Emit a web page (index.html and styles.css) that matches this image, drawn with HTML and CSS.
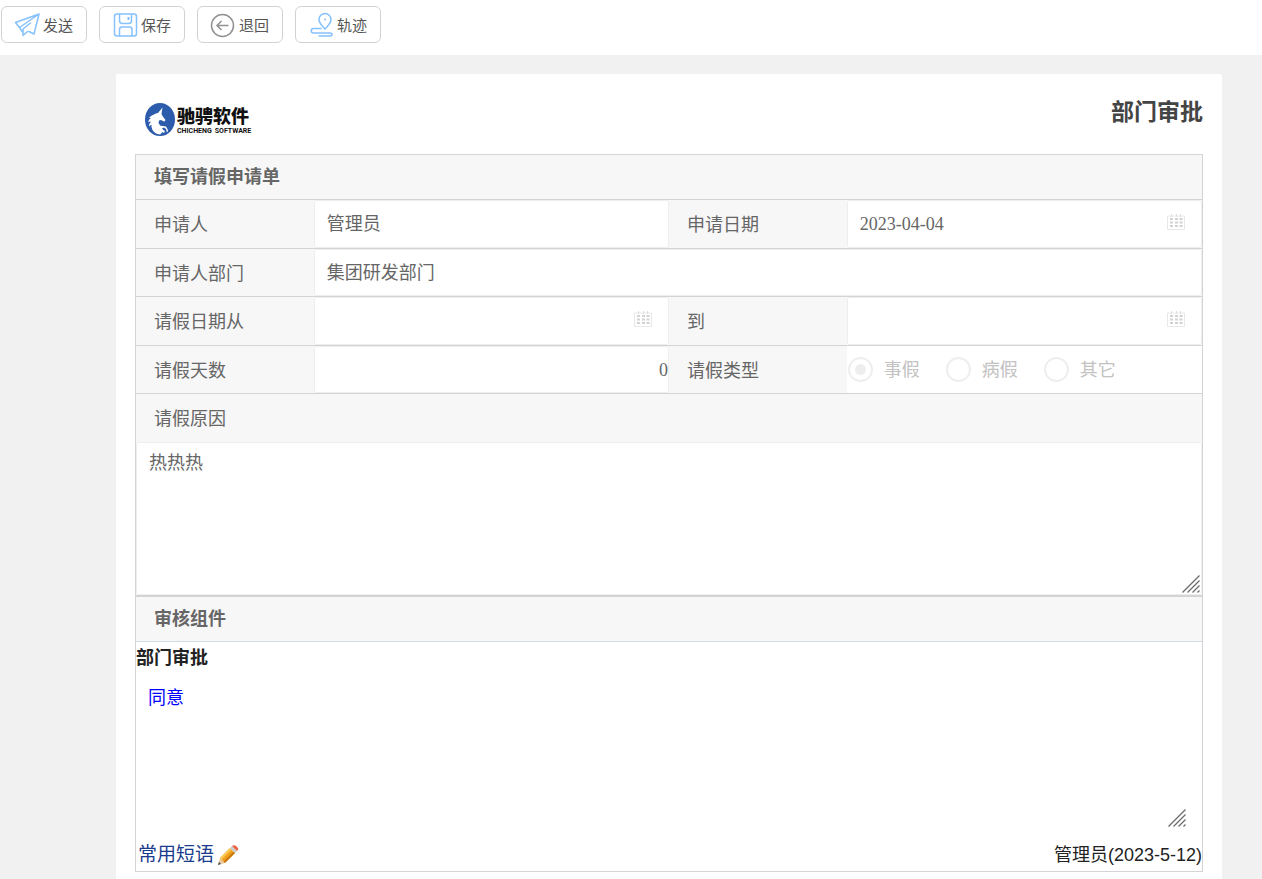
FILE: index.html
```html
<!DOCTYPE html>
<html lang="zh-CN">
<head>
<meta charset="utf-8">
<meta name="viewport" content="width=device-width, initial-scale=1">
<title>部门审批</title>
<link rel="stylesheet" href="styles.css">
</head>
<body>
<svg class="sprite" aria-hidden="true">
  <symbol id="calendar" viewBox="0 0 18 17">
    <path d="M.5 2v13.500h17V2z" fill="none" stroke="#e8e8e8"/>
    <path d="M4.500 0v3M9.500 0v3M13.500 0v3" stroke="#dedede"/>
    <path d="M3 5h3M8 5h3M12.500 5h3M3 8.500h3M8 8.500h3M12.500 8.500h3M3 12h3M8 12h3M12.500 12h3" stroke="#d2d2d2" stroke-width="2"/>
  </symbol>
  <symbol id="grip" viewBox="0 0 18 18">
    <path d="M.5 17.500L17.500.5M5.500 17.500L17.500 5.500M10.500 17.500l7-7M15.500 17.500l2-2" fill="none" stroke="#6b6b6b" stroke-width="1.300"/>
  </symbol>
</svg>
<header class="toolbar">
  <button type="button" class="tool">
    <svg class="tool-icon" viewBox="0 0 25 25" fill="none" stroke="#85c1fc" stroke-width="1.500" stroke-linejoin="round" stroke-linecap="round"><path d="M25 1L1.500 9.500l4 5M25 1l-5 20-5-2.500M25 1L5.500 14.500l3 4.500M9 22.500v-6.500l7.500-6M9 22.500l4.500-4"/></svg>
    <span>发送</span>
  </button>
  <button type="button" class="tool">
    <svg class="tool-icon" viewBox="0 0 25 25" fill="none" stroke="#85c1fc" stroke-width="1.500"><rect x="2.500" y="1" width="22" height="22" rx="2.500"/><path d="M7.500 1V7.500q0 3 3 3h6q3 0 3-3V1M7.500 23v-6.500q0-2.500 2.500-2.500h7.500q2.500 0 2.500 2.500V23"/><path d="M16.500 4v3" stroke-width="2"/></svg>
    <span>保存</span>
  </button>
  <button type="button" class="tool">
    <svg class="tool-icon" viewBox="0 0 25 25" fill="none" stroke="#919191" stroke-width="1.500"><circle cx="12.500" cy="12.500" r="11"/><path d="M18.500 12.500h-12M11.500 8L7 12.500l4.500 4.500"/></svg>
    <span>退回</span>
  </button>
  <button type="button" class="tool">
    <svg class="tool-icon" viewBox="0 0 25 25" fill="none" stroke="#85c1fc" stroke-width="1.500" stroke-linecap="round"><path d="M17 16q-6-6-6-9.500a6 6 0 0 1 12 0Q23 10 17 16zM13 15.500H5.500a2 2 0 0 0 0 4.500H22q2 0 2 1.500T22 23H11"/><circle cx="17" cy="6.500" r="1" fill="#85c1fc" stroke="none"/></svg>
    <span>轨迹</span>
  </button>
</header>
<main class="page">
  <form class="sheet">
    <div class="sheet-head">
      <div class="logo">
        <svg class="logo-mark" viewBox="0 0 30 33" aria-hidden="true">
          <ellipse cx="15" cy="16.500" rx="15" ry="16.500" fill="#2c5cab"/>
          <path d="M17.500 4.500L16.500 11l1 2 3 4-1 1.500-1.500-.5-2-1-2 .5q-1 2 .5 4 1 2 3.500 1.500l3 .5q1.500 2 2 4.500l-1 1.500-1-3.500-2-1.500-2 1q1 1.500 3 2.500l-1 2-1.500-1q-1.500 1.500-2.500 2.500-5-.5-7.500-4.500Q6 24 6.500 21.500l-2.500 2q0-3 2-5l-3 .5q1-3 3-4l-2 0q2-3 5-3.500 1.500-1.500 4-1.500z" fill="#fff"/>
        </svg>
        <div class="logo-text">
          <span class="logo-name">驰骋软件</span>
          <span class="logo-sub"><span>CHICHENG</span><span>SOFTWARE</span></span>
        </div>
      </div>
      <h1 class="title">部门审批</h1>
    </div>
    <div class="form">
      <h2 class="section">填写请假申请单</h2>
      <div class="row">
        <label class="label" for="applicant">申请人</label>
        <div class="field"><input class="input" id="applicant" type="text" value="管理员" readonly></div>
        <label class="label" for="apply-date">申请日期</label>
        <div class="field"><input class="input" id="apply-date" type="text" value="2023-04-04" readonly><svg class="calendar"><use href="#calendar"/></svg></div>
      </div>
      <div class="row">
        <label class="label" for="department">申请人部门</label>
        <div class="field wide"><input class="input" id="department" type="text" value="集团研发部门" readonly></div>
      </div>
      <div class="row">
        <label class="label" for="from">请假日期从</label>
        <div class="field"><input class="input" id="from" type="text" readonly><svg class="calendar"><use href="#calendar"/></svg></div>
        <label class="label" for="to">到</label>
        <div class="field"><input class="input" id="to" type="text" readonly><svg class="calendar"><use href="#calendar"/></svg></div>
      </div>
      <div class="row">
        <label class="label" for="days">请假天数</label>
        <div class="field"><input class="input number" id="days" type="text" value="0" readonly></div>
        <span class="label" id="kind">请假类型</span>
        <div class="field radios" role="radiogroup" aria-labelledby="kind">
          <label class="choice"><input type="radio" name="kind" checked disabled>事假</label>
          <label class="choice"><input type="radio" name="kind" disabled>病假</label>
          <label class="choice"><input type="radio" name="kind" disabled>其它</label>
        </div>
      </div>
      <label class="label reason-label" for="reason">请假原因</label>
      <div class="area">
        <textarea class="reason" id="reason" readonly>热热热</textarea>
        <svg class="grip"><use href="#grip"/></svg>
      </div>
      <h2 class="section review-head">审核组件</h2>
      <div class="review">
        <label class="review-title" for="opinion">部门审批</label>
        <div class="area opinion-area">
          <textarea class="opinion" id="opinion">同意</textarea>
          <svg class="grip"><use href="#grip"/></svg>
        </div>
        <div class="review-foot">
          <a class="phrases" href="#">常用短语
            <svg class="pencil" viewBox="0 0 22 22" aria-hidden="true"><path d="M1 21l2-7 5 5z" fill="#e8c9a0"/><path d="M1 21l1-3 2 2z" fill="#444"/><path d="M3 14L13 4l5 5L8 19z" fill="#f2a21c"/><path d="M3 14L13 4l1.500 1.500-10 10z" fill="#fbc95a"/><path d="M6.500 17.500l10-10L18 9 8 19z" fill="#c87810"/><path d="M13 4l2-2 5 5-2 2z" fill="#c9ccd0"/><path d="M15 2q2-1.500 4 0l1.500 1.500Q22 5 20 7z" fill="#e8633d"/></svg>
          </a>
          <span class="signature">管理员(2023-5-12)</span>
        </div>
      </div>
    </div>
  </form>
</main>
</body>
</html>
```
FILE: styles.css
```css
* { box-sizing: border-box; }
body {
  margin: 0;
  min-height: 100vh;
  display: flex;
  flex-direction: column;
  background: #f1f1f1;
  color: #666;
  font: 18px/24px "Liberation Sans", "Noto Sans CJK SC", sans-serif;
}
.sprite { display: none; }
.toolbar {
  display: flex;
  gap: 12px;
  padding: 6px 1px 12px;
  background: #fff;
}
.tool {
  display: flex;
  align-items: center;
  gap: 4px;
  min-width: 86px;
  height: 37px;
  padding: 2px 12px 0;
  border: 1px solid #d2d2d2;
  border-radius: 6px;
  background: #fff;
  color: #555;
  font: 15px/20px "Liberation Sans", "Noto Sans CJK SC", sans-serif;
}
.tool-icon { width: 25px; height: 25px; overflow: visible; }
.page {
  flex: 1;
  display: flex;
  padding: 19px 40px 0 116px;
}
.sheet {
  flex: 1;
  min-width: 0;
  padding: 0 19px 7px;
  border-radius: 2px 2px 0 0;
  background: #fff;
}
.sheet-head {
  display: flex;
  justify-content: space-between;
  align-items: flex-start;
  height: 80px;
}
.logo {
  display: flex;
  gap: 2px;
  padding: 29px 0 0 10px;
}
.logo-mark { width: 30px; height: 33px; }
.logo-text { display: flex; flex-direction: column; padding-top: 4px; color: #111; }
.logo-name { font-size: 18px; font-weight: 900; line-height: 20px; }
.logo-sub {
  display: flex;
  justify-content: space-between;
  gap: 3px;
  font: bold 7px/8px Roboto, sans-serif;
}
.title {
  margin: 0;
  padding-top: 22px;
  color: #444;
  font-size: 23px;
  line-height: 32px;
}
.form { border: 1px solid #d4d4d8; }
.section {
  margin: 0;
  padding: 0 18px;
  background: #f7f7f7;
  font-size: 18px;
  line-height: 44px;
}
.row {
  display: grid;
  grid-template-columns: 1fr 2fr 1fr 2fr;
  min-height: 49px;
  border-top: 1px solid #d4d4d4;
}
.row:nth-of-type(even) { min-height: 48px; }
.label {
  display: flex;
  align-items: center;
  padding: 2px 18px 0;
  background: #f7f7f7;
}
.field { position: relative; display: flex; min-width: 0; }
.wide { grid-column: span 3; }
.input {
  flex: 1;
  min-width: 0;
  padding: 0 12px;
  border: 1px solid #eee;
  border-radius: 2px;
  outline: 0;
  background: #fff;
  color: #666;
  font: 18px/24px "Liberation Serif", "Noto Sans CJK SC", serif;
}
.number { padding-right: 0; text-align: right; }
.calendar {
  position: absolute;
  right: 17px;
  top: 14px;
  width: 18px;
  height: 17px;
}
.radios { align-items: center; gap: 26px; color: #c2c2c2; }
.choice { display: flex; align-items: center; gap: 11px; }
.choice input {
  appearance: none;
  width: 25px;
  height: 25px;
  margin: 0;
  border: 2px solid #eee;
  border-radius: 50%;
}
.radios { padding-left: 1px; }
.choice input:checked { background: radial-gradient(circle, #eee 5px, transparent 6px); }
.reason-label {
  height: 49px;
  border-top: 1px solid #d4d4d4;
}
.area { position: relative; display: flex; }
.reason, .opinion {
  flex: 1;
  min-width: 0;
  padding: 8px 12px;
  border: 1px solid #eee;
  border-radius: 2px;
  outline: 0;
  resize: none;
  background: #fff;
  color: #666;
  font: 18px/24px "Liberation Sans", "Noto Sans CJK SC", sans-serif;
}
.reason { height: 153px; }
.grip {
  position: absolute;
  right: 2px;
  bottom: 2px;
  width: 18px;
  height: 18px;
}
.review-head { border-top: 2px solid #d4d4d4; }
.review { border-top: 1px solid #d4dae4; }
.review-title {
  display: block;
  color: #222;
  font-weight: bold;
  line-height: 32px;
}
.opinion-area { margin-right: 14px; }
.opinion {
  height: 155px;
  padding: 12px;
  border: 0;
  color: #00f;
}
.review-foot {
  display: flex;
  justify-content: space-between;
  align-items: center;
  height: 42px;
  padding-top: 10px;
}
.phrases {
  display: flex;
  align-items: center;
  gap: 3px;
  padding-left: 2px;
  color: #1a3c8c;
  font-size: 19px;
  text-decoration: none;
}
.pencil { width: 22px; height: 22px; }
.signature { color: #222; }
```
